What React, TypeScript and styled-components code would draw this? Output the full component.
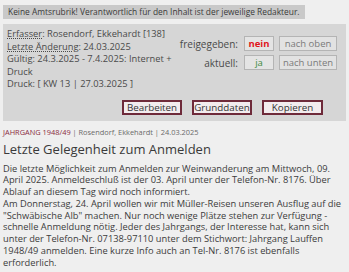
import styled, { createGlobalStyle } from 'styled-components'

const GlobalStyle = createGlobalStyle`
  body {
    margin: 0;
    background: #efefef;
    font-family: "Open Sans", "DejaVu Sans", sans-serif;
    color: #444;
  }
`;

export default function App() {
  return (
    <Page>
      <GlobalStyle />
      <Notice>Keine Amtsrubrik! Verantwortlich für den Inhalt ist der jeweilige Redakteur.</Notice>
      <Panel>
        <TopRow>
          <Info>
            <div><Abbr>Erfasser</Abbr>: Rosendorf, Ekkehardt [138]</div>
            <div><Abbr>Letzte Änderung</Abbr>: 24.03.2025</div>
            <div>Gültig: 24.3.2025 - 7.4.2025: Internet + Druck</div>
            <div>Druck: [ KW 13 | 27.03.2025 ]</div>
          </Info>
          <Status>
            <Label>freigegeben:</Label>
            <Flag $tone="#e0161c" $bold>nein</Flag>
            <Move>nach oben</Move>
            <Label>aktuell:</Label>
            <Flag $tone="#3c8a3c">ja</Flag>
            <Move>nach unten</Move>
          </Status>
        </TopRow>
        <Actions>
          <ActionButton>Bearbeiten</ActionButton>
          <ActionButton>Grunddaten</ActionButton>
          <ActionButton $wide>Kopieren</ActionButton>
        </Actions>
      </Panel>
      <Meta>
        <Rubric>JAHRGANG 1948/49</Rubric> | Rosendorf, Ekkehardt | 24.03.2025
      </Meta>
      <Title>Letzte Gelegenheit zum Anmelden</Title>
      <Body>
        Die letzte Möglichkeit zum Anmelden zur Weinwanderung am Mittwoch, 09. April 2025. Anmeldeschluß ist der 03. April unter der Telefon-Nr. 8176. Über Ablauf an diesem Tag wird noch informiert.
        <br />
        Am Donnerstag, 24. April wollen wir mit Müller-Reisen unseren Ausflug auf die "Schwäbische Alb" machen. Nur noch wenige Plätze stehen zur Verfügung - schnelle Anmeldung nötig. Jeder des Jahrgangs, der Interesse hat, kann sich unter der Telefon-Nr. 07138-97110 unter dem Stichwort: Jahrgang Lauffen 1948/49 anmelden. Eine kurze Info auch an Tel-Nr. 8176 ist ebenfalls erforderlich.
      </Body>
    </Page>
  )
}

const Page = styled.div`
  padding: 5px 3px 0;
`;

const Notice = styled.div`
  width: fit-content;
  background: #c9c9c9;
  color: #3a3a3a;
  font-size: 8.4px;
  line-height: 14px;
  padding: 0 5px;
`;

const Panel = styled.div`
  margin-top: 5px;
  background: #d6d6d6;
  padding: 4px 9px 6px 4px;
  display: flex;
  flex-direction: column;
`;

const TopRow = styled.div`
  display: flex;
  justify-content: space-between;
  align-items: flex-start;
`;

const Info = styled.div`
  width: 168px;
  font-size: 9.3px;
  line-height: 12.5px;
  color: #4a4a4a;
`;

const Abbr = styled.span`
  text-decoration: underline dotted;
  text-underline-offset: 1px;
`;

const Status = styled.div`
  display: grid;
  grid-template-columns: auto 30px 58px;
  column-gap: 5px;
  row-gap: 4px;
  align-items: center;
  margin-top: 8px;
`;

const Label = styled.span`
  text-align: right;
  font-size: 10px;
  color: #4a4a4a;
  padding-right: 1px;
`;

const Flag = styled.span<{ $tone: string; $bold?: boolean }>`
  height: 15px;
  box-sizing: border-box;
  border: 1px solid #b4b4b4;
  background: #e4e4e4;
  color: ${p => p.$tone};
  font-weight: ${p => (p.$bold ? 700 : 400)};
  font-size: 9.5px;
  line-height: 13px;
  text-align: center;
`;

const Move = styled.span`
  height: 15px;
  box-sizing: border-box;
  border: 1px solid #b4b4b4;
  background: #e2e2e2;
  color: #7a7a7a;
  font-size: 9.5px;
  line-height: 13px;
  text-align: center;
`;

const Actions = styled.div`
  display: flex;
  justify-content: flex-end;
  gap: 10px;
  margin-top: 9px;
  padding-right: 14px;
`;

const ActionButton = styled.button<{ $wide?: boolean }>`
  width: ${p => (p.$wide ? '61px' : '60px')};
  height: 15px;
  padding: 0;
  border: 2px solid #6e2a3a;
  background: #f2ecee;
  color: #333;
  font-family: inherit;
  font-size: 9.8px;
  line-height: 11px;
`;

const Meta = styled.div`
  margin-top: 6px;
  font-size: 7.4px;
  line-height: 10px;
  color: #6a6a6a;
`;

const Rubric = styled.span`
  color: #8a2a3e;
`;

const Title = styled.h1`
  margin: 3px 0 5px;
  font-size: 13px;
  font-weight: 400;
  line-height: 18px;
  color: #3a3a3a;
`;

const Body = styled.p`
  margin: 0;
  font-size: 9.3px;
  line-height: 11.8px;
  color: #3c3c3c;
`;
